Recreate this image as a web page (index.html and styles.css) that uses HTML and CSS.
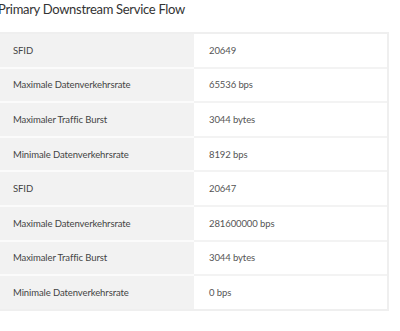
FILE: index.html
```html
<!DOCTYPE html>
<html>
<head>
<meta charset="utf-8">
<link rel="stylesheet" href="styles.css">
</head>
<body>
<div class="wrap">
  <h2 class="title">Primary Downstream Service Flow</h2>
  <table class="flow">
    <tr><th>SFID</th><td>20649</td></tr>
    <tr><th>Maximale Datenverkehrsrate</th><td>65536 bps</td></tr>
    <tr><th>Maximaler Traffic Burst</th><td>3044 bytes</td></tr>
    <tr><th>Minimale Datenverkehrsrate</th><td>8192 bps</td></tr>
    <tr><th>SFID</th><td>20647</td></tr>
    <tr><th>Maximale Datenverkehrsrate</th><td>281600000 bps</td></tr>
    <tr><th>Maximaler Traffic Burst</th><td>3044 bytes</td></tr>
    <tr><th>Minimale Datenverkehrsrate</th><td>0 bps</td></tr>
  </table>
</div>
</body>
</html>
```
FILE: styles.css
```css
html, body {
  margin: 0;
  padding: 0;
  background: #fff;
}
body {
  font-family: Lato, "Open Sans", sans-serif;
  color: #333;
  overflow: hidden;
}
.wrap {
  margin-left: -2px;
  width: 391px;
}
.title {
  margin: 0;
  font-size: 13px;
  letter-spacing: -0.3px;
  font-weight: 400;
  line-height: 18px;
  height: 32px;
  color: #333;
}
.flow {
  width: 100%;
  border-spacing: 0;
  border-collapse: separate;
  border: 2px solid #efefef;
  border-left: none;
}
.flow th, .flow td {
  height: 32.6px;
  padding: 0 0 0 15px;
  font-size: 9.5px;
  letter-spacing: -0.1px;
  font-weight: 400;
  text-align: left;
  vertical-align: middle;
  border-bottom: 2px solid #f8f8f8;
}
.flow tr:last-child th, .flow tr:last-child td {
  border-bottom: none;
}
.flow th {
  width: 181px;
  background: #f2f2f2;
  color: #444;
  border-bottom-color: #fbfbfb;
}
.flow td {
  background: #fff;
  color: #555;
  border-bottom-color: #f3f3f3;
}
```
